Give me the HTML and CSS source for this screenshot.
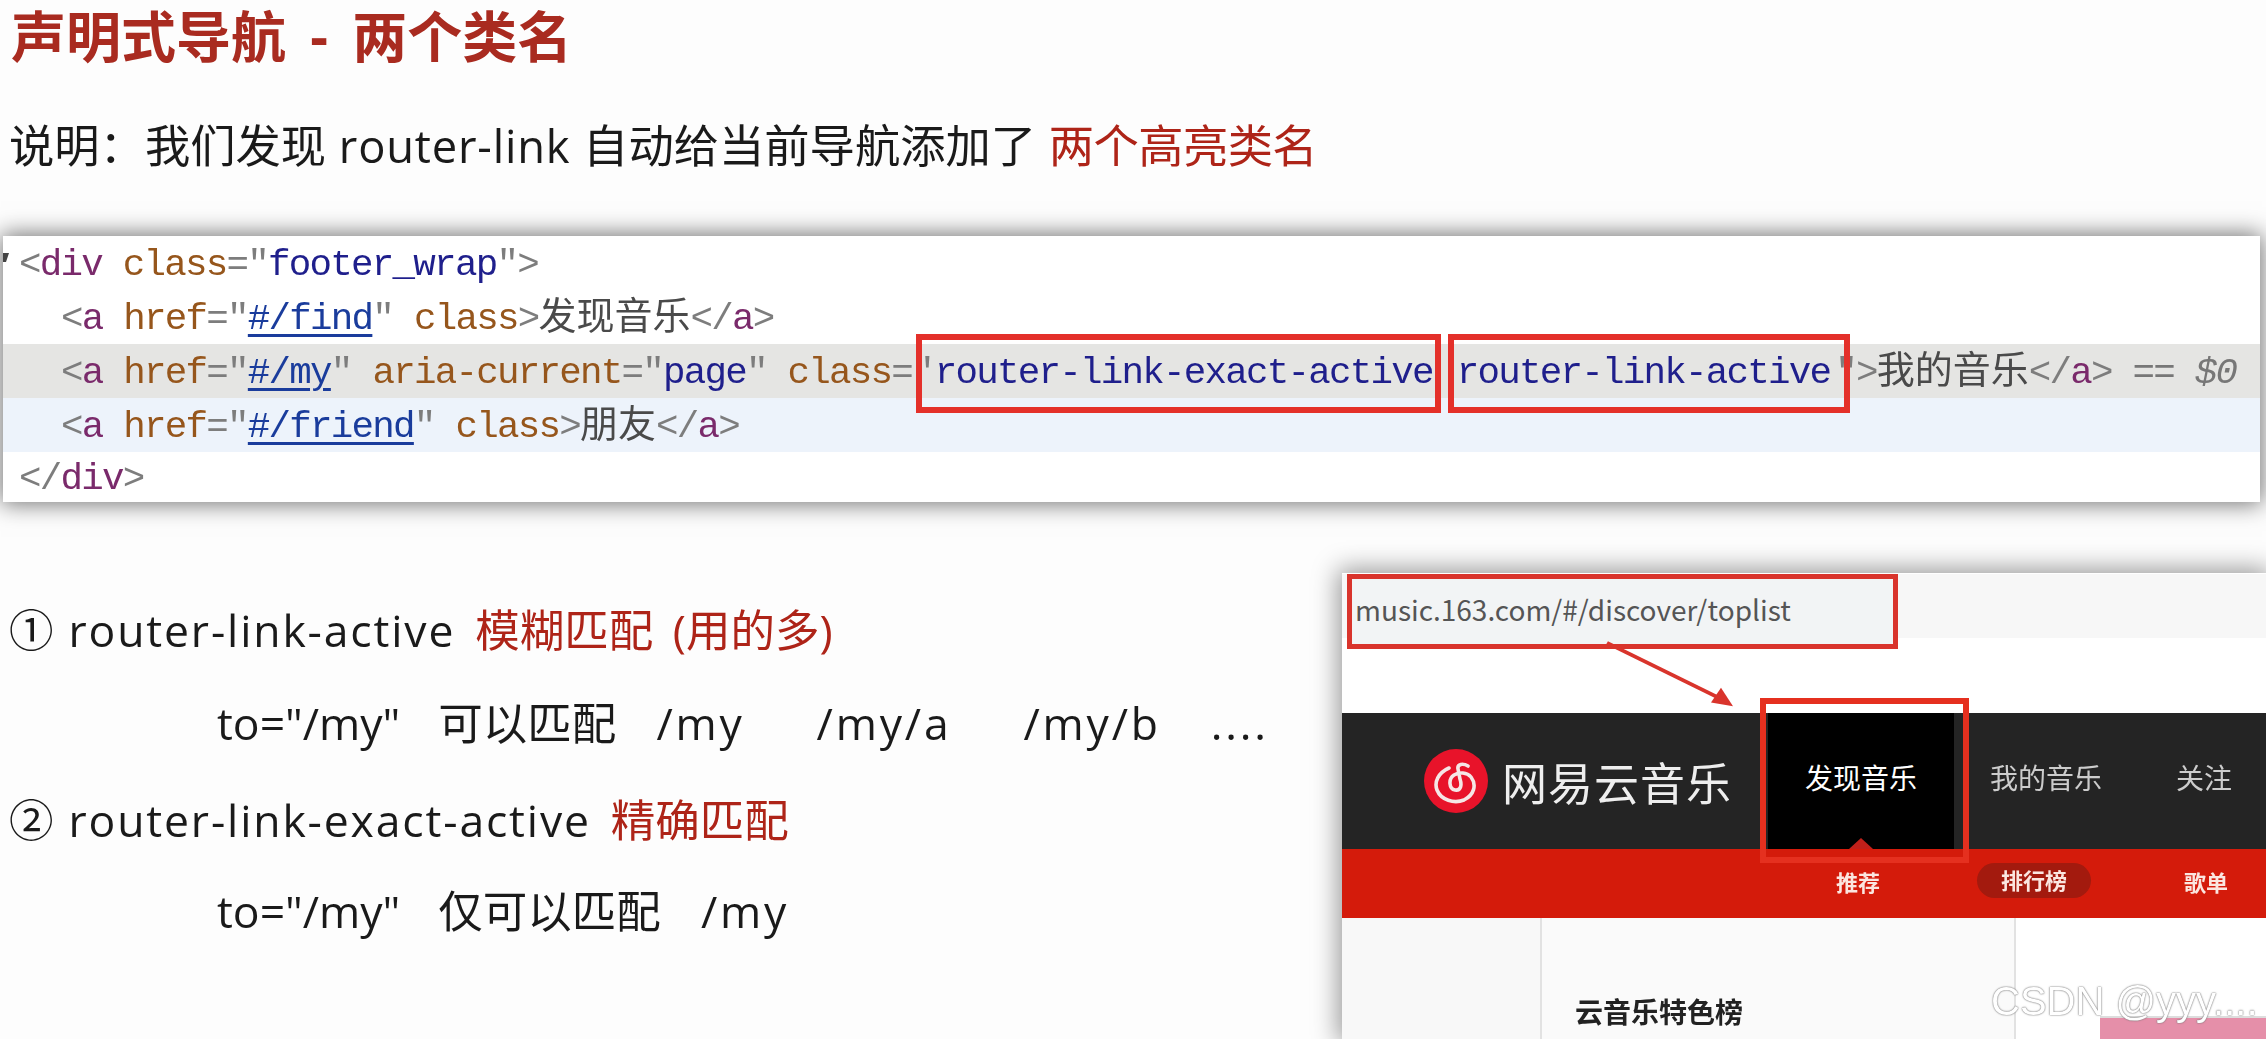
FILE: index.html
```html
<!DOCTYPE html>
<html lang="zh">
<head>
<meta charset="utf-8">
<title>声明式导航 - 两个类名</title>
<link rel="stylesheet" href="styles.css">
</head>
<body>
<header class="head">
  <h1 class="title">声明式导航 - 两个类名</h1>
  <p class="intro">说明：我们发现 <span class="word">router-link</span> 自动给当前导航添加了 <span class="red tight">两个高亮类名</span></p>
</header>

<section class="code">
  <div class="row top"><i class="caret"></i><span class="br">&lt;</span><span class="tag">div</span> <span class="attr">class</span><span class="br">="</span><span class="val">footer_wrap</span><span class="br">"&gt;</span></div>
  <div class="row in"><span class="br">&lt;</span><span class="tag">a</span> <span class="attr">href</span><span class="br">="</span><span class="link">#/find</span><span class="br">"</span> <span class="attr">class</span><span class="br">&gt;</span><span class="cjk">发现音乐</span><span class="br">&lt;/</span><span class="tag">a</span><span class="br">&gt;</span></div>
  <div class="row in sel"><span class="br">&lt;</span><span class="tag">a</span> <span class="attr">href</span><span class="br">="</span><span class="link">#/my</span><span class="br">"</span> <span class="attr">aria-current</span><span class="br">="</span><span class="val">page</span><span class="br">"</span> <span class="attr">class</span><span class="br">="</span><span class="val box box-a">router-link-exact-active</span> <span class="val box box-b">router-link-active</span><span class="br close">"&gt;</span><span class="cjk">我的音乐</span><span class="br">&lt;/</span><span class="tag">a</span><span class="br">&gt;</span> <span class="eq">== $0</span></div>
  <div class="row in hov"><span class="br">&lt;</span><span class="tag">a</span> <span class="attr">href</span><span class="br">="</span><span class="link">#/friend</span><span class="br">"</span> <span class="attr">class</span><span class="br">&gt;</span><span class="cjk">朋友</span><span class="br">&lt;/</span><span class="tag">a</span><span class="br">&gt;</span></div>
  <div class="row end"><span class="br">&lt;/</span><span class="tag">div</span><span class="br">&gt;</span></div>
</section>

<section class="lower">
  <div class="list">
    <p class="line">①<span class="rl">router-link-active</span><span class="red gap-a">模糊匹配 (用的多)</span></p>
    <p class="line sub">to="/my"<span class="gap-b">可以匹配</span><span class="gap-c path">/my</span><span class="gap-d path">/my/a</span><span class="gap-d path">/my/b</span><span class="gap-e path">....</span></p>
    <p class="line">②<span class="rl">router-link-exact-active</span><span class="red gap-a">精确匹配</span></p>
    <p class="line sub last">to="/my"<span class="gap-b">仅可以匹配</span><span class="gap-c path">/my</span></p>
  </div>

  <div class="shot">
    <div class="addr-row"><div class="addr">music.163.com/#/discover/toplist</div></div>
    <div class="spacer"></div>
    <div class="darkbar">
      <svg class="logo-mark" viewBox="0 0 64 64"><circle cx="32" cy="32" r="32" fill="#e8132a"/><path d="M25 19C14 24 10 33 13 41C17 51 30 55 40 51C50 46 53 36 47 28C43 23 35 23 30 26C24 30 25 40 31 41C37 42 38 36 36 30L34 20C33 15 39 14 44 17" fill="none" stroke="#f5e6e6" stroke-width="3.6" stroke-linecap="round"/></svg>
      <span class="logo-text">网易云音乐</span>
      <span class="tab active">发现音乐<i class="tri"></i></span>
      <span class="tab mine">我的音乐</span>
      <span class="tab follow">关注</span>
    </div>
    <div class="redbar">
      <span class="sub-a">推荐</span>
      <span class="pill">排行榜</span>
      <span class="sub-c">歌单</span>
    </div>
    <div class="cols">
      <div class="col-l"></div>
      <div class="col-m">云音乐特色榜</div>
      <div class="col-r"><div class="pink"></div></div>
    </div>
    <div class="tabbox"></div>
    <svg class="arrow" viewBox="0 0 140 75" preserveAspectRatio="none"><path d="M6 2L120 62" fill="none" stroke="#d9342c" stroke-width="4"/><path d="M132 70L110 66L120 50Z" fill="#d9342c"/></svg>
    <div class="mark">CSDN @yyy....</div>
  </div>
</section>
</body>
</html>
```
FILE: styles.css
```css
html, body { margin: 0; padding: 0; }
body {
  width: 2266px;
  height: 1039px;
  overflow: hidden;
  background: #fdfdfd;
  color: #1a1a1a;
  font-family: "Open Sans", "Noto Sans CJK SC", sans-serif;
  filter: blur(0.5px);
}
.red { color: #ae2418; }

.head { padding-left: 9px; height: 236px; }
.title { margin: 0; padding-left: 2px; font-size: 55px; line-height: 72px; font-weight: 700; word-spacing: 10px; color: #a92b20; }
.intro { margin: 34px 0 0; font-size: 45.3px; line-height: 80px; word-spacing: 1px; }
.word { letter-spacing: 0.8px; }
.tight { letter-spacing: -0.6px; }

.code {
  margin: 0 6px 0 3px;
  height: 266px;
  background: #fff;
  box-shadow: 0 0 22px 2px rgba(0,0,0,.55);
  font-family: "Liberation Mono", monospace;
  font-size: 37.5px;
  letter-spacing: -1.75px;
  position: relative;
}
.row { height: 54px; line-height: 58px; padding-left: 16px; white-space: pre; }
.row.in { padding-left: 58px; }
.row.end { line-height: 54px; }
.row.sel { background: #e5e5e3; }
.row.hov { background: #edf3fb; }
.caret {
  position: absolute; left: 0; top: 17px;
  border-left: 3px solid #444; border-top: 9px solid #444;
  border-right: 3px solid transparent;
}
.br { color: #7d7d7d; }
.tag { color: #7a2a6b; }
.attr { color: #96561c; }
.val { color: #1f1f8c; }
.link { color: #1a3c9c; text-decoration: underline; text-underline-offset: 5px; text-decoration-thickness: 3px; }
.cjk { font-family: "Noto Sans CJK SC", sans-serif; font-size: 38px; line-height: 0; letter-spacing: 0; color: #4a4a4a; }
.eq { font-style: italic; color: #777; }
.box { position: relative; display: inline-block; height: 58px; }
.box::after {
  content: "";
  position: absolute;
  top: -10px; bottom: -11px;
  border: 6px solid #e4302a;
}
.box-a { margin-left: 2px; }
.box-a::after { left: -19px; right: -8px; }
.box-b { margin-left: 3px; }
.box-b::after { left: -9px; right: -20px; }
.close { margin-left: 5px; }

.lower { display: flex; justify-content: space-between; margin-top: 71px; }
.list { padding: 9px 0 0 9px; }
.line { margin: 0; height: 95px; line-height: 95px; font-size: 44.5px; white-space: pre; }
.line.sub { padding-left: 208px; line-height: 92px; }
.line.last { margin-top: -2px; }
.rl { margin-left: 15px; letter-spacing: 1.85px; }
.gap-a { margin-left: 20px; word-spacing: 8px; }
.gap-b { margin-left: 38px; }
.gap-c { margin-left: 40px; }
.gap-d { margin-left: 72px; }
.gap-e { margin-left: 50px; }
.path { letter-spacing: 2.8px; }

.shot {
  position: relative;
  width: 924px;
  height: 466px;
  background: #fff;
  box-shadow: 0 0 24px 4px rgba(0,0,0,.4);
  flex: none;
  font-family: "Noto Sans CJK SC", sans-serif;
}
.addr-row { height: 64px; background: #f7f7f7; }
.addr {
  box-sizing: border-box;
  margin: 1px 0 0 5px;
  width: 551px;
  height: 75px;
  border: 5px solid #d9342c;
  background: #f2f4f5;
  padding-left: 3px;
  line-height: 60px;
  font-size: 28px;
  color: #555;
  position: relative;
}
.spacer { height: 75px; }
.darkbar {
  height: 136px;
  background: #242424;
  display: flex;
  align-items: center;
  padding-left: 82px;
  color: #ccc;
}
.logo-mark { width: 64px; height: 64px; flex: none; }
.logo-text { margin-left: 1px; padding-left: 13px; font-size: 45px; letter-spacing: 1px; color: #eee; width: 266px; flex: none; }
.tab { font-size: 28px; position: relative; }
.active {
  background: #000; color: #fff;
  height: 136px; line-height: 128px;
  width: 186px; box-sizing: border-box;
  padding-left: 37px;
  flex: none;
}
.tri {
  position: absolute; left: 81px; bottom: 0;
  border: 12px solid transparent; border-top: 0;
  border-bottom: 11px solid #c0201a;
}
.mine { margin: 0 0 8px 36px; }
.follow { margin: 0 0 8px 74px; }
.redbar {
  height: 69px;
  box-sizing: border-box;
  padding: 0 0 6px 494px;
  background: #d41b0b;
  display: flex;
  align-items: center;
  font-size: 22px;
  font-weight: 700;
  color: #fbe6e0;
}
.pill {
  margin-left: 97px;
  background: #a31a0e;
  border-radius: 18px;
  width: 114px; height: 35px;
  line-height: 32px;
  text-align: center;
}
.sub-c { margin-left: 93px; }
.cols { display: flex; height: 122px; }
.col-l { width: 198px; background: #f8f8f8; border-right: 2px solid #e2e2e2; }
.col-m {
  width: 472px; height: 49px;
  padding-top: 73px;
  background: #fafafa; border-right: 2px solid #e2e2e2;
  font-size: 28px; font-weight: 700; color: #222;
  text-indent: 33px;
  line-height: 40px;
}
.col-r { flex: 1; padding-top: 75px; height: 47px; }
.pink { margin: 23px 0 0 84px; height: 22px; background: #e58fa9; border-top: 2px solid #ddd; }
.tabbox {
  position: absolute; left: 418px; top: 125px;
  width: 209px; height: 165px; box-sizing: border-box;
  border: 6px solid #e5301f;
}
.arrow { position: absolute; left: 259px; top: 68px; width: 140px; height: 70px; }
.mark {
  position: absolute; left: 649px; top: 404px;
  font-family: "Liberation Sans", sans-serif;
  font-size: 40px; line-height: 48px; white-space: pre;
  color: #fff;
  text-shadow: 0 0 2px #777, 0 0 1px #777;
}
```
